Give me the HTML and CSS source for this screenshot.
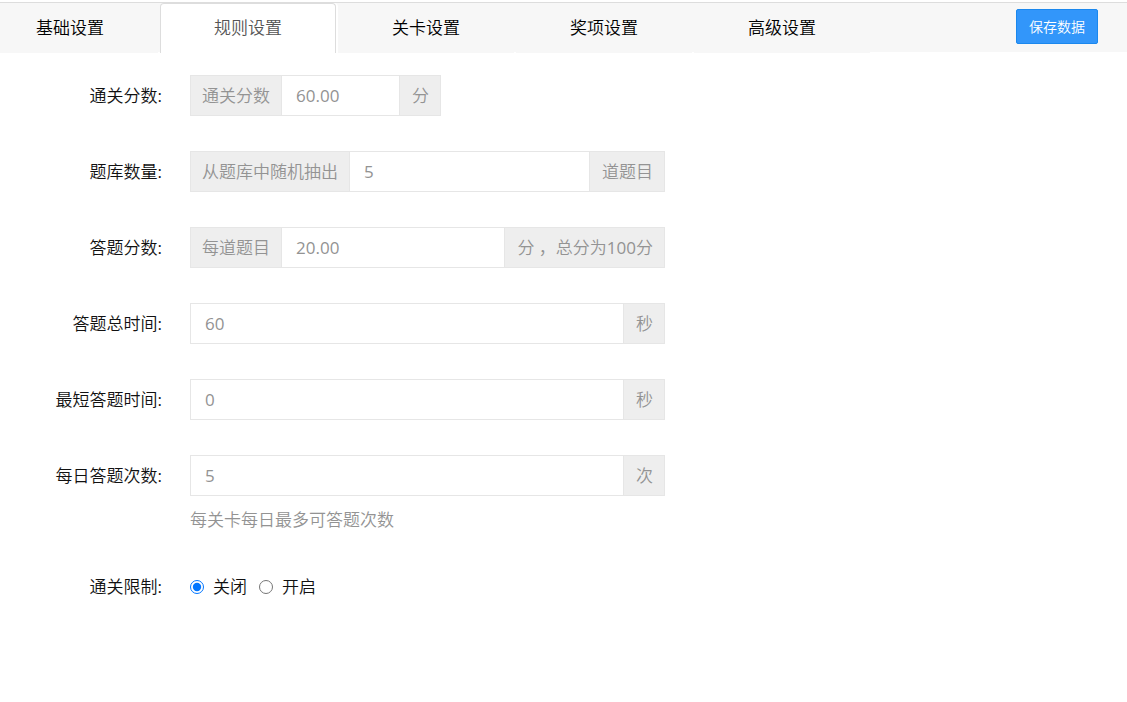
FILE: index.html
```html
<!DOCTYPE html>
<html lang="zh-CN">
  <head>
    <meta charset="utf-8">
    <title>规则设置</title>
    <link rel="stylesheet" href="styles.css">
  </head>

  <body>
    <header class="topbar">
      <nav class="tabs">
        <a class="tab" href="#base">基础设置</a>
        <a class="tab active" href="#rule">规则设置</a>
        <a class="tab" href="#level">关卡设置</a>
        <a class="tab" href="#prize">奖项设置</a>
        <a class="tab" href="#advanced">高级设置</a>
      </nav>
      <button class="save" type="submit" form="rule">保存数据</button>
    </header>
    <form class="form" id="rule" method="post">
      <div class="row">
        <label class="name" for="pass">通关分数:</label>
        <div class="field">
          <div class="group short">
            <span class="addon">通关分数</span>
            <input type="text" id="pass" name="pass" value="60.00">
            <span class="addon">分</span>
          </div>
        </div>
      </div>
      <div class="row">
        <label class="name" for="count">题库数量:</label>
        <div class="field">
          <div class="group">
            <span class="addon">从题库中随机抽出</span>
            <input type="text" id="count" name="count" value="5">
            <span class="addon">道题目</span>
          </div>
        </div>
      </div>
      <div class="row">
        <label class="name" for="score">答题分数:</label>
        <div class="field">
          <div class="group">
            <span class="addon">每道题目</span>
            <input type="text" id="score" name="score" value="20.00">
            <span class="addon">分 ，总分为100分</span>
          </div>
        </div>
      </div>
      <div class="row">
        <label class="name" for="total">答题总时间:</label>
        <div class="field">
          <div class="group">
            <input type="text" id="total" name="total" value="60">
            <span class="addon">秒</span>
          </div>
        </div>
      </div>
      <div class="row">
        <label class="name" for="min">最短答题时间:</label>
        <div class="field">
          <div class="group">
            <input type="text" id="min" name="min" value="0">
            <span class="addon">秒</span>
          </div>
        </div>
      </div>
      <div class="row">
        <label class="name" for="daily">每日答题次数:</label>
        <div class="field">
          <div class="group">
            <input type="text" id="daily" name="daily" value="5">
            <span class="addon">次</span>
          </div>
          <p class="help">每关卡每日最多可答题次数</p>
        </div>
      </div>
      <div class="row" role="radiogroup" aria-labelledby="limit">
        <span class="name" id="limit">通关限制:</span>
        <div class="field radios">
          <label><input type="radio" name="limit" value="0" checked>关闭</label>
          <label><input type="radio" name="limit" value="1">开启</label>
        </div>
      </div>
    </form>
  </body>
</html>
```

FILE: styles.css
```css
* {
  box-sizing: border-box;
}
body {
  margin: 0;
  padding-top: 2px;
  background: #fff;
  color: #111;
  font-family: "Open Sans", "Noto Sans CJK SC DemiLight", "Noto Sans CJK SC",
    sans-serif;
  font-size: 17px;
}
input,
button {
  font-family: inherit;
  font-size: inherit;
}

.topbar {
  display: flex;
  justify-content: space-between;
  align-items: flex-start;
  height: 50px;
  padding-right: 29px;
  border-top: 1px solid #ddd;
  background: #f7f7f7;
}
.tabs {
  display: flex;
  gap: 2px;
}
.tab {
  height: 50px;
  padding: 0 53px;
  border: 1px solid #f7f7f7;
  border-bottom: 0;
  background: #f7f7f7;
  color: #000;
  line-height: 48px;
  text-decoration: none;
  white-space: nowrap;
}
.tab:first-child {
  padding-left: 35px;
}
.tab.active {
  border-color: #ddd;
  border-radius: 4px 4px 0 0;
  background: #fff;
  box-shadow: 2px 0 0 #fff;
  color: #555;
}
.save {
  height: 35px;
  margin-top: 6px;
  padding: 0 12px;
  border: 1px solid #1b88ee;
  border-radius: 2px;
  background: #3296fa;
  color: #fff;
  font-size: 14px;
  line-height: 32px;
  cursor: pointer;
}

.form {
  display: flex;
  flex-direction: column;
  gap: 35px;
  padding: 23px 0;
}
.row {
  display: flex;
  gap: 28px;
}
.name {
  flex: none;
  width: 162px;
  line-height: 41px;
  text-align: right;
}
.field {
  flex: 1;
  max-width: 475px;
}
.group {
  display: flex;
  height: 41px;
  border: 1px solid #e6e6e6;
  color: #939393;
}
.group.short {
  max-width: 251px;
}
.group input {
  flex: 1;
  min-width: 0;
  padding: 0 14px;
  border: 0;
  background: #fff;
  color: #939393;
  outline: 0;
}
.addon {
  padding: 0 11px;
  border-right: 1px solid #e6e6e6;
  background: #eee;
  line-height: 39px;
  white-space: nowrap;
}
input + .addon {
  padding: 0 11px 0 12px;
  border-right: 0;
  border-left: 1px solid #e6e6e6;
}
.help {
  margin: 12px 0 0;
  color: #939393;
  line-height: 23px;
}
.radios {
  display: flex;
  gap: 12px;
  line-height: 41px;
}
.radios label {
  display: flex;
  align-items: center;
}
.radios input {
  width: 14px;
  height: 14px;
  margin: 0 9px 0 0;
}
```
